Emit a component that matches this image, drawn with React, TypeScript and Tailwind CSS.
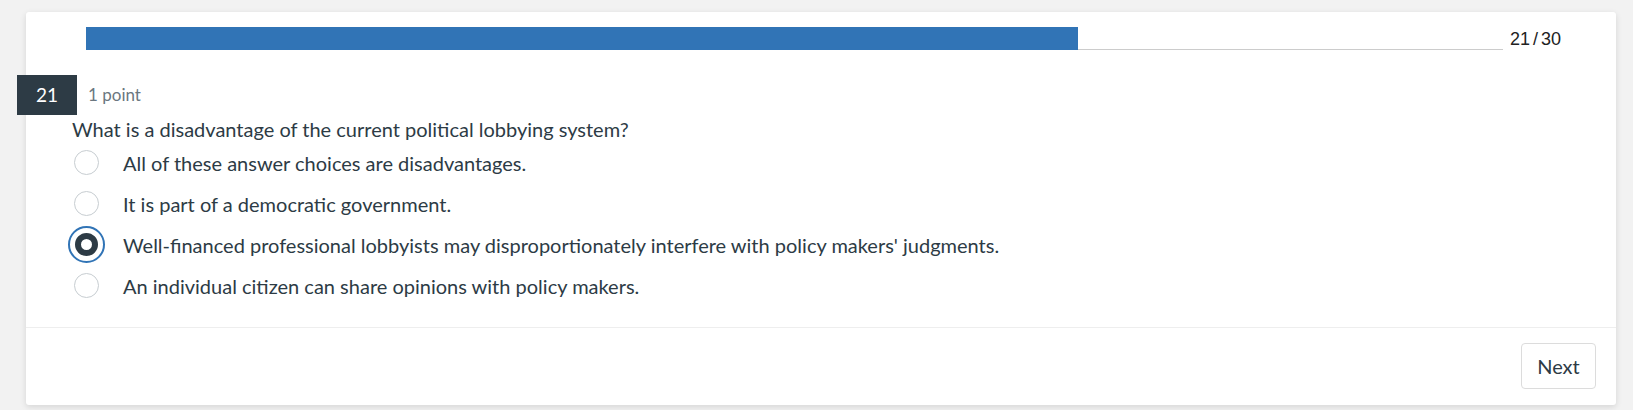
import React from "react";

const options = [
  "All of these answer choices are disadvantages.",
  "It is part of a democratic government.",
  "Well-financed professional lobbyists may disproportionately interfere with policy makers' judgments.",
  "An individual citizen can share opinions with policy makers.",
];

export default function App() {
  return (
    <div className="min-h-[410px] w-full bg-[#f2f2f2] pt-[12px] pl-[26px] pr-[17px] font-['Lato',sans-serif] text-[#2d3b45]">
      <div className="flex h-[393px] flex-col rounded-[3px] bg-white shadow-[0_2px_6px_rgba(0,0,0,0.12)]">
        <div className="flex items-end pl-[60px] pr-[40px] pt-[15px]">
          <div className="flex h-[23px] w-[1417px] border-b border-[#cccccc]">
            <div className="h-[23px] w-[70%] bg-[#3174b6]" />
          </div>
          <div className="ml-[7px] mb-[1px] font-['Liberation_Sans',sans-serif] text-[18px] leading-[20px] text-[#222]">
            21<span className="mx-[3px]">/</span>30
          </div>
        </div>
        <div className="mt-[25px] flex items-center">
          <div className="ml-[-9px] flex h-[40px] w-[60px] items-center justify-center bg-[#2d3b45] text-[19px] text-white">
            21
          </div>
          <div className="ml-[11px] text-[17px] text-[#6b7780]">1 point</div>
        </div>
        <div className="ml-[46px] mt-[2px] text-[20px] leading-[24px]">
          What is a disadvantage of the current political lobbying system?
        </div>
        <div className="ml-[41px] mt-[1px] flex flex-col">
          {options.map((o, i) => (
            <div key={i} className="flex h-[41px] items-center">
              <div className="flex h-[38px] w-[38px] items-center justify-center">
                {i === 2 ? (
                  <div className="flex h-[37px] w-[37px] items-center justify-center rounded-full border-[2px] border-[#3174b6]">
                    <div className="h-[23px] w-[23px] rounded-full border-[6px] border-[#2d3b45] bg-white" />
                  </div>
                ) : (
                  <div className="h-[25px] w-[25px] rounded-full border border-[#c7cdd1] bg-white" />
                )}
              </div>
              <div className="ml-[18px] text-[20px] leading-[24px]">{o}</div>
            </div>
          ))}
        </div>
        <div className="mt-[21px] border-t border-[#eeeeee]" />
        <div className="flex flex-1 items-start justify-end pr-[20px] pt-[15px]">
          <button className="h-[46px] w-[75px] rounded-[4px] border border-[#dcdcdc] bg-white text-[20px] text-[#2d3b45]">
            Next
          </button>
        </div>
      </div>
    </div>
  );
}
